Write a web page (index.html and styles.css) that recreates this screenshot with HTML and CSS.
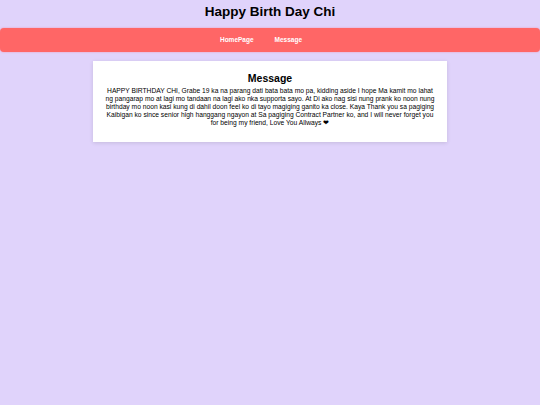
FILE: index.html
```html
<!DOCTYPE html>
<html>
<head>
<meta charset="utf-8">
<link rel="stylesheet" href="styles.css">
</head>
<body>
<header class="top">
  <h1 class="title">Happy Birth Day Chi</h1>
</header>
<nav class="nav">
  <ul class="nav-list">
    <li class="nav-item"><a class="nav-link" href="#">HomePage</a></li>
    <li class="nav-item"><a class="nav-link" href="#">Message</a></li>
  </ul>
</nav>
<main class="main">
  <section class="card">
    <h2 class="card-title">Message</h2>
    <p class="card-text">HAPPY BIRTHDAY CHI, Grabe 19 ka na parang dati bata bata mo pa, kidding aside I hope Ma kamit mo lahat ng pangarap mo at lagi mo tandaan na lagi ako nka supporta sayo. At Di ako nag sisi nung prank ko noon nung birthday mo noon kasi kung di dahil doon feel ko di tayo magiging ganito ka close. Kaya Thank you sa pagiging Kaibigan ko since senior high hanggang ngayon at Sa pagiging Contract Partner ko, and I will never forget you for being my friend, Love You Allways ❤</p>
  </section>
</main>
</body>
</html>
```

FILE: styles.css
```css
html, body {
  margin: 0;
  padding: 0;
}
body {
  background: #e0d3fb;
  font-family: "Liberation Sans", Arial, sans-serif;
  color: #000;
  height: 405px;
}
.top {
  display: flex;
  justify-content: center;
  padding-top: 4px;
  height: 28px;
  box-sizing: border-box;
}
.title {
  margin: 0;
  font-size: 13.5px;
  line-height: 16px;
  font-weight: bold;
}
.nav {
  height: 24px;
  background: #ff6666;
  border-radius: 4px;
  box-shadow: 0 0 2px rgba(255, 100, 120, 0.6);
  display: flex;
  align-items: center;
}
.nav-list {
  list-style: none;
  margin: 0;
  padding: 0 18px 0 0;
  flex: 1;
  display: flex;
  justify-content: center;
  align-items: center;
  gap: 21px;
  font-size: 6.5px;
  line-height: 8px;
}
.nav-item {
  display: block;
}
.nav-link {
  color: #fff;
  font-size: 6.5px;
  font-weight: bold;
  text-decoration: none;
}
.main {
  display: flex;
  justify-content: center;
  padding-top: 9px;
}
.card {
  width: 354px;
  box-sizing: border-box;
  background: #fff;
  padding: 11px 10px 15px;
  box-shadow: 0 1px 4px rgba(0, 0, 0, 0.12);
  text-align: center;
}
.card-title {
  margin: 0 0 2px;
  font-size: 10.5px;
  line-height: 13px;
  font-weight: bold;
}
.card-text {
  margin: 0;
  font-size: 6.7px;
  line-height: 8px;
}
```
